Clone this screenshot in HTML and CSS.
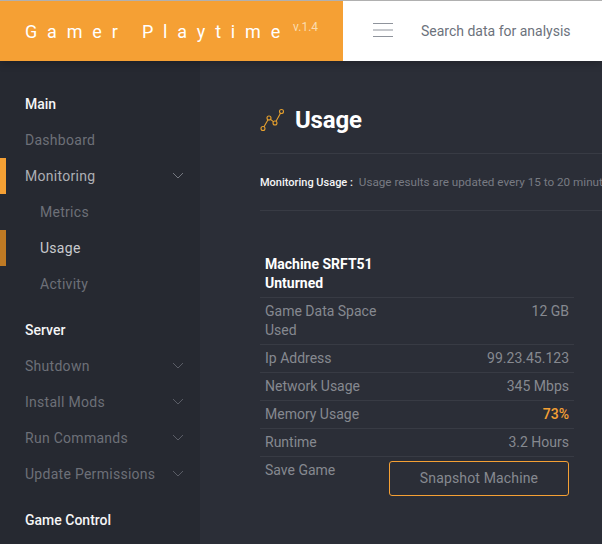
FILE: index.html
```html
<!DOCTYPE html>
<html lang="en">
<head>
<meta charset="utf-8">
<title>Gamer Playtime</title>
<link rel="stylesheet" href="styles.css">
</head>
<body>
<div class="app">
  <header class="topbar">
    <div class="brand"><span class="brand-name">Gamer Playtime</span><span class="brand-ver">v.1.4</span></div>
    <div class="search">
      <svg class="burger" width="20" height="16" viewBox="0 0 20 16"><path d="M0 1.500h20M0 8h20M0 14.500h20" stroke="#8f949c" stroke-width="1" fill="none"/></svg>
      <span class="search-text">Search data for analysis</span>
    </div>
  </header>
  <div class="body-row">
    <nav class="sidebar">
      <div class="nav-item nav-head">Main</div>
      <div class="nav-item">Dashboard</div>
      <div class="nav-item nav-open"><span>Monitoring</span><svg class="chev" width="12" height="7" viewBox="0 0 12 7"><path d="M1 1l5 5 5-5" stroke="#8a8d94" stroke-width=".8" fill="none"/></svg></div>
      <div class="nav-item nav-sub">Metrics</div>
      <div class="nav-item nav-sub nav-current">Usage</div>
      <div class="nav-item nav-sub">Activity</div>
      <div class="nav-item nav-head nav-gap">Server</div>
      <div class="nav-item"><span>Shutdown</span><svg class="chev" width="12" height="7" viewBox="0 0 12 7"><path d="M1 1l5 5 5-5" stroke="#686b73" stroke-width=".8" fill="none"/></svg></div>
      <div class="nav-item"><span>Install Mods</span><svg class="chev" width="12" height="7" viewBox="0 0 12 7"><path d="M1 1l5 5 5-5" stroke="#686b73" stroke-width=".8" fill="none"/></svg></div>
      <div class="nav-item"><span>Run Commands</span><svg class="chev" width="12" height="7" viewBox="0 0 12 7"><path d="M1 1l5 5 5-5" stroke="#686b73" stroke-width=".8" fill="none"/></svg></div>
      <div class="nav-item"><span>Update Permissions</span><svg class="chev" width="12" height="7" viewBox="0 0 12 7"><path d="M1 1l5 5 5-5" stroke="#686b73" stroke-width=".8" fill="none"/></svg></div>
      <div class="nav-item nav-head nav-gap">Game Control</div>
    </nav>
    <main class="content">
      <div class="title-row">
        <svg class="title-icon" width="24" height="24" viewBox="0 0 24 24" fill="none" stroke="#e6a02e" stroke-width="1.100"><circle cx="3" cy="20.500" r="2"/><circle cx="9" cy="10" r="2"/><circle cx="15" cy="15" r="2"/><circle cx="21.500" cy="3.500" r="2"/><path d="M4 18.700l4-7M10.600 11.300l3 2.500M16 13.200l4.500-8"/></svg>
        <h1 class="title">Usage</h1>
      </div>
      <p class="notice"><b class="notice-key">Monitoring Usage :</b> Usage results are updated every 15 to 20 minutes</p>
      <table class="stats">
        <colgroup><col class="col-lbl"><col></colgroup>
        <tbody>
          <tr><th class="stats-head" colspan="2">Machine SRFT51<br>Unturned</th></tr>
          <tr><td class="lbl">Game Data Space Used</td><td class="val">12 GB</td></tr>
          <tr><td class="lbl">Ip Address</td><td class="val">99.23.45.123</td></tr>
          <tr><td class="lbl">Network Usage</td><td class="val">345 Mbps</td></tr>
          <tr><td class="lbl">Memory Usage</td><td class="val val-hot">73%</td></tr>
          <tr><td class="lbl">Runtime</td><td class="val">3.2 Hours</td></tr>
          <tr><td class="lbl">Save Game</td><td class="val"><button class="snap">Snapshot Machine</button></td></tr>
        </tbody>
      </table>
    </main>
  </div>
</div>
</body>
</html>
```
FILE: styles.css
```css
* { box-sizing: border-box; }
html, body { margin: 0; padding: 0; height: 100%; overflow: hidden; }
body { font-family: Roboto, "Liberation Sans", sans-serif; font-size: 14px; background: #2b2e37; color: #868990; }
.app { width: 602px; height: 544px; overflow: hidden; display: flex; flex-direction: column; border-top: 1px solid #b0b0b0; }
.topbar { flex: 0 0 60px; display: flex; background: #fff; position: relative; z-index: 2; box-shadow: 0 2px 8px rgba(0,0,0,.25); }
.brand { flex: 0 0 343px; background: #f5a034; color: #fff; display: flex; align-items: center; padding-left: 25px; white-space: nowrap; }
.brand-name { font-size: 18px; letter-spacing: 9.830px; }
.brand-ver { font-size: 12px; color: #fbdcb0; margin-left: 3px; margin-top: -9px; }
.search { flex: 1; display: flex; align-items: center; padding-left: 30px; gap: 28px; white-space: nowrap; color: #6c727c; }
.burger { flex: none; margin-top: -3px; }
.search-text { font-size: 14px; }
.body-row { flex: 1; display: flex; min-height: 0; }
.sidebar { flex: 0 0 200px; background: #262931; padding-top: 25px; }
.nav-item { height: 36px; line-height: 36px; padding: 0 16px 0 25px; display: flex; justify-content: space-between; align-items: center; color: #6d7078; letter-spacing: .28px; white-space: nowrap; position: relative; }
.nav-head { color: #f5f5f6; font-weight: 500; letter-spacing: 0; }
.nav-gap { margin-top: 10px; }
.nav-sub { padding-left: 40px; }
.nav-open { color: #adafb4; }
.nav-open::before, .nav-current::before { content: ""; position: absolute; left: 0; top: 0; width: 6px; height: 36px; background: #f5a034; }
.nav-current { color: #c9cace; }
.nav-current::before { background: #bf7a24; }
.chev { flex: none; margin-top: -2px; }
.content { flex: 1; min-width: 0; padding: 0 0 0 60px; overflow: hidden; }
.title-row { height: 93px; border-bottom: 1px solid #383b44; display: flex; align-items: center; padding-top: 26px; gap: 11px; margin-right: -2px; }
.title-icon { flex: none; }
.title { margin: 0; font-size: 24px; font-weight: 700; color: #fff; line-height: 1; letter-spacing: -.2px; }
.notice { margin: 0; height: 57px; line-height: 56px; font-size: 11.700px; white-space: nowrap; border-bottom: 1px solid #383b44; color: #787b83; }
.notice-key { color: #f5f5f6; font-weight: 500; font-size: 11px; margin-right: 3px; }
.stats { width: 314px; margin-top: 40px; border-collapse: collapse; table-layout: fixed; line-height: 19px; }
.stats td, .stats th { padding: 4px 5px; vertical-align: top; }
.stats tr + tr td { border-top: 1px solid #383b44; }
.stats-head { text-align: left; color: #fff; font-weight: 700; }
.col-lbl { width: 124px; }
.val { text-align: right; }
.val-hot { color: #f5a034; font-weight: 500; }
.snap { width: 180px; height: 35px; background: transparent; border: 1px solid #f5a034; border-radius: 3px; color: #868990; font: inherit; letter-spacing: .15px; padding: 0; display: inline-block; vertical-align: top; }
```
